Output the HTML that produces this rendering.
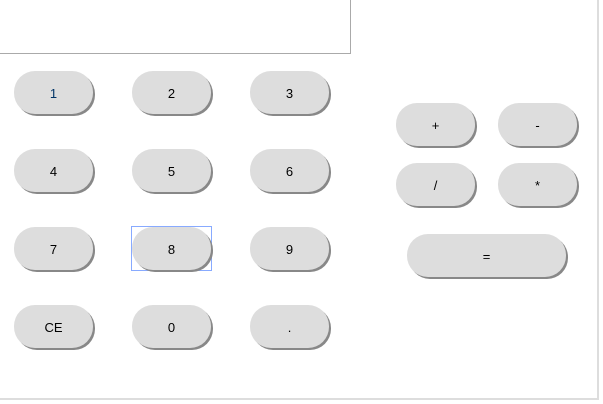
<html><head><style>
body{margin:0;width:603px;height:404px;position:relative;background:#fff;font-family:"Liberation Sans",Arial,sans-serif;overflow:hidden}
.frame{position:absolute;left:0;top:0;width:597px;height:398px;border-right:2px solid #ddd;border-bottom:2px solid #ddd}
.disp{position:absolute;left:-1px;top:-1px;width:350px;height:53px;border:1px solid #aaa}
.b{position:absolute;width:79px;height:43px;background:#ddd;border-radius:21px;box-shadow:2px 2px 0 #888;font-size:13px;line-height:46px;text-align:center;color:#000}
.f{position:absolute;left:131px;top:226px;width:79px;height:43px;border:1px solid #8af}
</style></head><body>
<div class="frame"></div>
<div class="disp"></div>
<div class="b" style="left:14px;top:71px;color:#036">1</div>
<div class="b" style="left:132px;top:71px">2</div>
<div class="b" style="left:250px;top:71px">3</div>
<div class="b" style="left:14px;top:149px">4</div>
<div class="b" style="left:132px;top:149px">5</div>
<div class="b" style="left:250px;top:149px">6</div>
<div class="b" style="left:14px;top:227px">7</div>
<div class="f"></div>
<div class="b" style="left:132px;top:227px">8</div>
<div class="b" style="left:250px;top:227px">9</div>
<div class="b" style="left:14px;top:305px">CE</div>
<div class="b" style="left:132px;top:305px">0</div>
<div class="b" style="left:250px;top:305px">.</div>
<div class="b" style="left:396px;top:103px">+</div>
<div class="b" style="left:498px;top:103px">-</div>
<div class="b" style="left:396px;top:163px">/</div>
<div class="b" style="left:498px;top:163px">*</div>
<div class="b" style="left:407px;top:234px;width:159px">=</div>
</body></html>
